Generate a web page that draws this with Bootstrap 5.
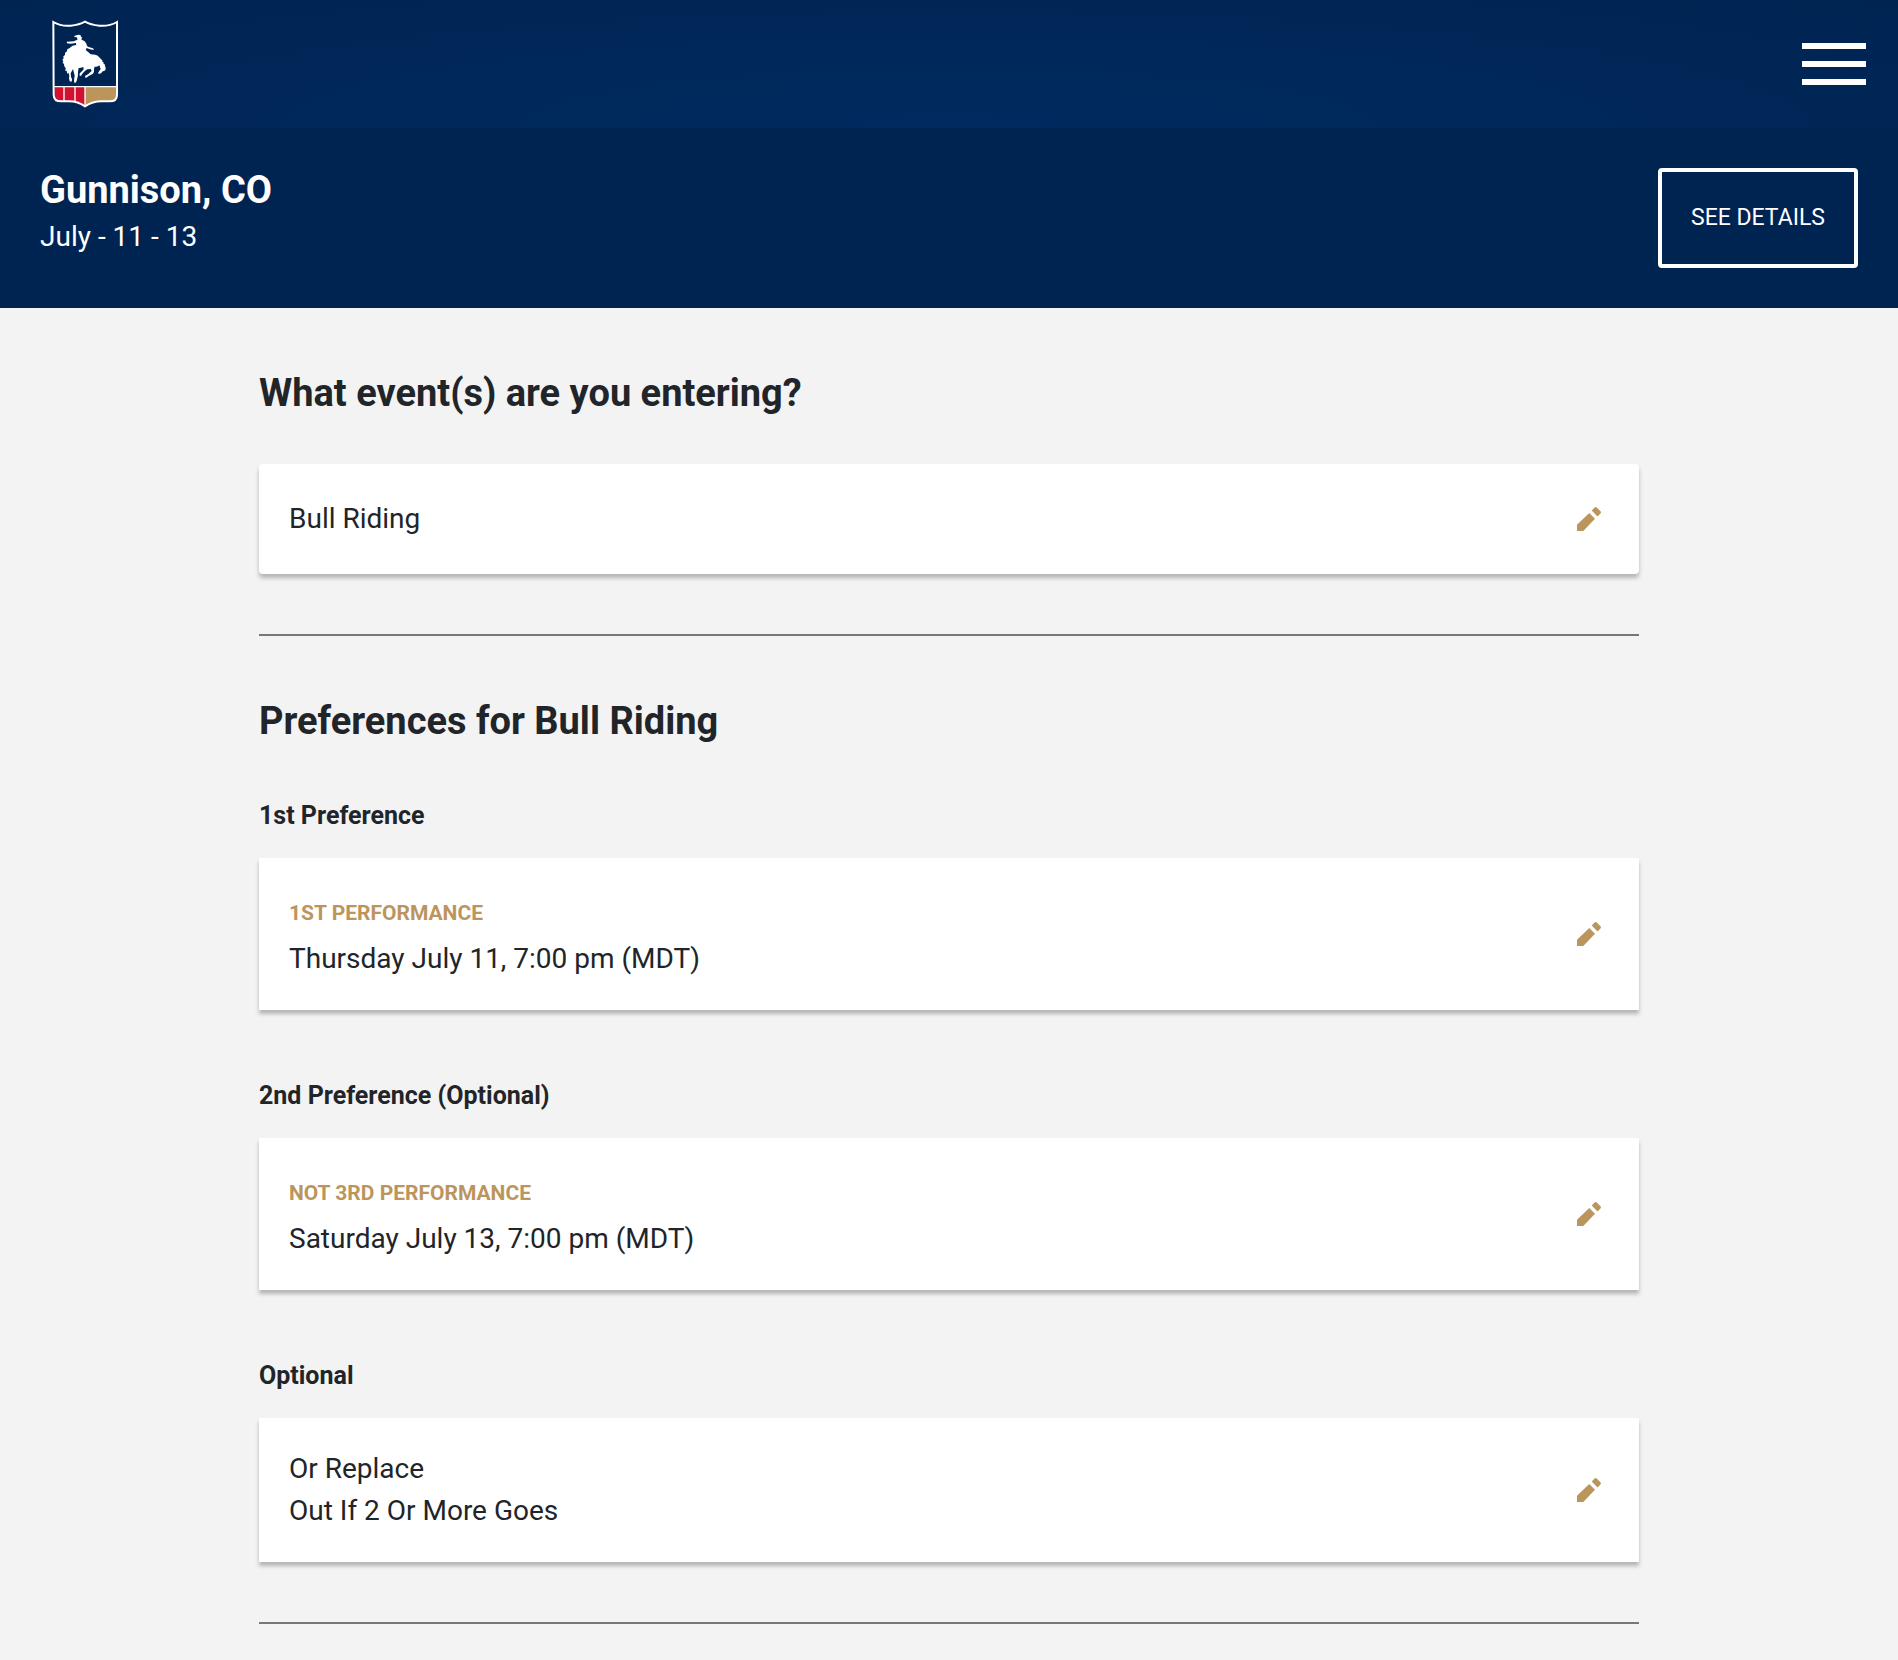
<!DOCTYPE html>
<html lang="en">
<head>
<meta charset="utf-8">
<meta name="viewport" content="width=device-width, initial-scale=1">
<title>Gunnison, CO - Event entry</title>
<link href="https://cdn.jsdelivr.net/npm/bootstrap@5.3.0/dist/css/bootstrap.min.css" rel="stylesheet">
<style>
  body { background: #f3f3f3; color: #212529; font-family: Roboto, "Liberation Sans", sans-serif; font-size: 28px; line-height: 42px; }
  .site-header { background: radial-gradient(ellipse at 50% 100%, #002b60 0%, #002452 100%); height: 128px; padding: 0 32px 0 52px; }
  .menu-toggle { gap: 12px; width: 64px; }
  .menu-toggle span { height: 6px; }
  .rodeo-bar { background: #002452; padding: 40px; }
  .page-title { font-size: 38px; line-height: 54px; margin-bottom: 44px; }
  .rodeo-bar .page-title { line-height: 44px; margin-bottom: 4px; }
  .btn-details { --bs-btn-border-width: 4px; --bs-btn-border-radius: 4px; --bs-btn-font-size: 23px; --bs-btn-padding-x: 0; width: 200px; height: 100px; }
  .entry-form { max-width: 1380px; }
  .section-block { padding-top: 58px; }
  .section-rule { border-top: 2px solid #777; margin: 60px 0 0; opacity: 1; }
  .entry-card { padding: 30px 34px 30px 30px; box-shadow: 0 4px 4px rgba(0, 0, 0, .25); }
  .entry-card-single { border-radius: 4px; padding-top: 34px; padding-bottom: 34px; }
  .pref-title { font-size: 25px; line-height: 36px; margin-bottom: 24px; }
  .perf-name { color: #bc955c; font-size: 21px; line-height: 50px; }
  .pref-list { gap: 68px; padding-top: 6px; }
  .edit-btn { color: #bc955c; line-height: 0; }
</style>
<script src="https://cdn.jsdelivr.net/npm/bootstrap@5.3.0/dist/js/bootstrap.bundle.min.js"></script>
</head>
<body>
<svg class="d-none" aria-hidden="true">
  <symbol id="pencil" viewBox="0 0 24 24"><path fill="currentColor" d="M3 16.3V21h4.7l8.8-9.2-4.3-4.3zM14.4 5.2l1.8-1.8q.8-.8 1.6 0l2.8 2.8q.8.8 0 1.6l-1.8 2q-.4.4-.8 0l-3.6-3.8q-.4-.4 0-.8z"/></symbol>
</svg>

<header class="site-header d-flex align-items-center justify-content-between">
  <a href="#" aria-label="Home" class="d-block lh-1">
    <svg class="d-block" width="66" height="88" viewBox="36 30 198 264" aria-hidden="true">
      <path fill="#002452" d="M40 37q24 13 52 10 25-3 43-13 18 10 43 13 28 3 52-10v183H40z"/>
      <path fill="#d2102f" d="M43 230h92v58c-14-10-30-14-48-15H64q-21 0-21-18z"/>
      <path fill="#bc955c" d="M135 230h95v25q0 18-21 18h-23c-20 0-36 4-51 15z"/>
      <path fill="none" stroke="#fff" stroke-width="4" d="M43 230h188M72 230v43M105 230v46M135 230v58"/>
      <path fill="none" stroke="#fff" stroke-width="6" d="M40 36q24 14 52 11 26-2 43-12 17 10 43 12 28 3 53-11v218q0 20-22 20h-24c-20 0-35 5-50 15-14-10-31-15-49-15H64q-23 0-23-20z"/>
      <path fill="#fff" d="M80 95l22-1q6-4 10-4l0-5-2-3-7-1 1-4 6-1q3-3 10-1 3 1 3 5l4 3-3 3 1 3 9 5q6 7 7 14l5 3 13 4 3 5-12-2-10-4-4 8-30 8-4-8 7-15-1-8-17 2-10-1z"/>
      <path fill="#fff" d="M137 120q8 6 15 13l14 1q8 2 13 9l9 9-1 4 5 1-3 2q7 3 6 8 4 8 1 14-4 3-8 3-3 6-8 7-6 1-6-2l8-12-4-11q-8 6-14 4l-2 7q2 10-4 15l-12 6-8 6-3-3 1-4 8-4 11-10-3-6-10 1q-9 5-15 13l-4 7-5-2q0-8 6-11 6-4 7-8l-1-6q-7 3-14 3l-2 11q1 14-4 28l-3 5h-4l-1-7 2-14-5-20-7 13 1 10 3 8-1 7-6-1-2-9 1-7q-2-5-1-9l-5 2-2-9-4 1 1-8q-6-5-5-13l-4-4 2-4-3-5 4-4-1-6 5-4v-7l5-3 2-7 7-4q8-9 19-9z"/>
    </svg>
  </a>
  <button type="button" class="menu-toggle d-flex flex-column bg-transparent border-0 p-0" aria-label="Open menu">
    <span class="bg-white w-100"></span><span class="bg-white w-100"></span><span class="bg-white w-100"></span>
  </button>
</header>

<section class="rodeo-bar text-white d-flex justify-content-between align-items-start">
  <div>
    <h1 class="page-title fw-bold">Gunnison, CO</h1>
    <p class="mb-0">July - 11 - 13</p>
  </div>
  <button type="button" class="btn btn-details btn-outline-light border-white text-white text-uppercase">See details</button>
</section>

<main class="entry-form mx-auto pb-3">
  <section class="section-block">
    <h2 class="page-title fw-bold">What event(s) are you entering?</h2>
    <div class="entry-card entry-card-single bg-white d-flex justify-content-between align-items-center">
      <span>Bull Riding</span>
      <button type="button" class="edit-btn bg-transparent border-0 p-0" aria-label="Edit event"><svg width="32" height="32" aria-hidden="true"><use href="#pencil"/></svg></button>
    </div>
    <hr class="section-rule">
  </section>

  <section class="section-block">
    <h2 class="page-title fw-bold">Preferences for Bull Riding</h2>
    <div class="pref-list d-flex flex-column">
      <div>
        <h3 class="pref-title fw-bold">1st Preference</h3>
        <div class="entry-card bg-white d-flex justify-content-between align-items-center">
          <div>
            <div class="perf-name fw-bold text-uppercase">1st Performance</div>
            <div>Thursday July 11, 7:00 pm (MDT)</div>
          </div>
          <button type="button" class="edit-btn bg-transparent border-0 p-0" aria-label="Edit first preference"><svg width="32" height="32" aria-hidden="true"><use href="#pencil"/></svg></button>
        </div>
      </div>
      <div>
        <h3 class="pref-title fw-bold">2nd Preference (Optional)</h3>
        <div class="entry-card bg-white d-flex justify-content-between align-items-center">
          <div>
            <div class="perf-name fw-bold text-uppercase">Not 3rd Performance</div>
            <div>Saturday July 13, 7:00 pm (MDT)</div>
          </div>
          <button type="button" class="edit-btn bg-transparent border-0 p-0" aria-label="Edit second preference"><svg width="32" height="32" aria-hidden="true"><use href="#pencil"/></svg></button>
        </div>
      </div>
      <div>
        <h3 class="pref-title fw-bold">Optional</h3>
        <div class="entry-card bg-white d-flex justify-content-between align-items-center">
          <div>
            <div>Or Replace</div>
            <div>Out If 2 Or More Goes</div>
          </div>
          <button type="button" class="edit-btn bg-transparent border-0 p-0" aria-label="Edit options"><svg width="32" height="32" aria-hidden="true"><use href="#pencil"/></svg></button>
        </div>
      </div>
    </div>
    <hr class="section-rule">
  </section>
</main>
</body>
</html>
